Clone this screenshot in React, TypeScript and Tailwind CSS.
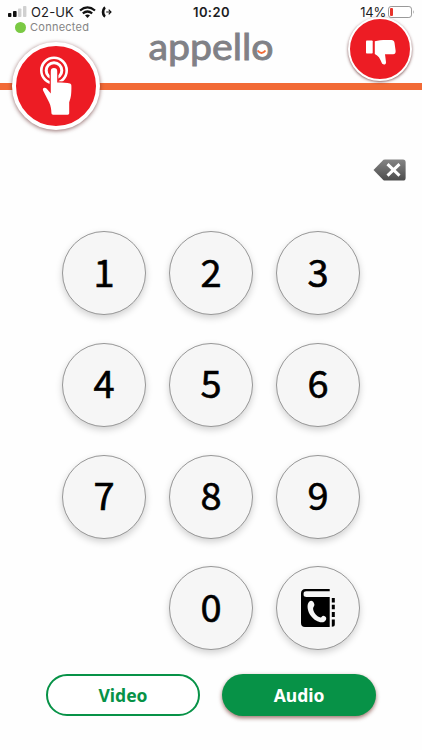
import { clsx } from 'clsx';

const digits = ['1', '2', '3', '4', '5', '6', '7', '8', '9'];

const StatusBar = () => (
    <div className="relative flex h-5 items-end justify-between pl-2 pr-[7px] font-['Inter','Noto_Sans',sans-serif] text-[#1c1c1e]">
        <div className="flex items-center">
            <svg className="h-3 w-[19px]" viewBox="0 0 19 12">
                <rect x="0" y="7" width="3.4" height="4" rx="0.8" fill="#111" />
                <rect x="5" y="5" width="3.6" height="6" rx="0.8" fill="#111" />
                <rect x="10" y="2.5" width="3.4" height="8.5" rx="0.8" fill="#d0d0d0" />
                <rect x="15" y="0" width="3.4" height="11" rx="0.8" fill="#d0d0d0" />
            </svg>
            <span className="ml-1 w-[43px] text-[13px] leading-4 tracking-[0.15px] whitespace-nowrap">O2-UK</span>
            <svg className="ml-[5px] h-3 w-[17px]" viewBox="0 0 17 12" fill="none" stroke="#111" strokeWidth="2.2">
                <path d="M1 4.5Q8.5-1.8 16 4.5" />
                <path d="M3.8 7.4Q8.5 3.6 13.2 7.4" />
                <path d="M6 9.3Q8.5 7.6 11 9.3L8.5 12Z" fill="#111" stroke="none" />
            </svg>
            <svg className="ml-[5px] h-3 w-[11px]" viewBox="0 0 11 12">
                <path d="M2.6.9 3.8.6l.9 2.2-1 1.1q-.6 2.1 0 4.2l1 1.1-.9 2.2-1.2-.3Q.7 9 .7 6T2.6.9Z" fill="#111" />
                <path d="M5.2 6H10M7.7 3.7 10 6 7.7 8.3" fill="none" stroke="#111" strokeWidth="1.1" />
            </svg>
        </div>
        <span className="absolute left-[193px] top-1 w-9 text-[13px] leading-4 font-semibold tracking-[0.4px] whitespace-nowrap">10:20</span>
        <div className="flex items-center">
            <span className="text-[13px] leading-4 tracking-[-0.2px]">14%</span>
            <svg className="ml-[2px] h-3 w-[27px]" viewBox="0 0 27 12">
                <rect x="0.5" y="0.5" width="23" height="11" rx="2.6" fill="#fff" stroke="#999" />
                <rect x="2" y="2" width="3" height="8" rx="1" fill="#e8342b" />
                <path d="M25 4q1.6 2 0 4Z" fill="#999" />
            </svg>
        </div>
    </div>
);

const Logo = () => (
    <svg className="absolute left-[140px] top-[16px] h-[62px] w-[144px]" viewBox="0 0 144 62">
        <text
            x="8.5"
            y="44"
            textLength="125"
            lengthAdjust="spacingAndGlyphs"
            fontSize="37.5"
            fill="#808186"
            stroke="#808186"
            strokeWidth="0.9"
            fontFamily="Lato, sans-serif"
        >
            appello
        </text>
        <path d="M117.5 34.5q4 5 8 0" fill="none" stroke="#f26a36" strokeWidth="2" />
    </svg>
);

const TouchIcon = () => (
    <svg className="size-[88px] shrink-0" viewBox="0 0 88 88">
        <circle cx="42" cy="28.5" r="12.7" fill="none" stroke="#fff" strokeWidth="2.6" />
        <circle cx="42" cy="28.5" r="7.8" fill="none" stroke="#fff" strokeWidth="3" />
        <path
            d="M38.8 29.2a3.2 3.2 0 0 1 6.4 0v11.3c5 .1 9.8.1 12.8 1 1.1.4 1.5 1.5 1.4 3 0 6.7-.2 10.7-2.2 15.7v10.9c0 1-.5 1.6-1.5 1.6H41.2c-1.2 0-1.8-.7-1.8-1.9-.1-3.5-.6-6.8-2.2-10.3L31.2 48.8c-1.3-2.4 1.3-4 3.3-2.2l4.3 5Z"
            fill="#fff"
            stroke="#ed1c24"
            strokeWidth="2.4"
            paintOrder="stroke"
        />
    </svg>
);

const ThumbsDownIcon = () => (
    <svg className="size-[64px] shrink-0" viewBox="0 0 64 64" fill="#fff">
        <rect x="18" y="23.5" width="6.7" height="13" rx="0.8" />
        <path d="M26.8 24.3c3.3-1 7-1.4 12-1.4h4.6c1.8 0 2.8 1 3.1 2.8l1.1 7.9c.3 2.3-.5 3.7-2.5 3.7h-8.1l1 7.9c.3 2.4-3 3.3-4.2.9-1.6-4.8-3.7-7.7-7-9.2Z" />
    </svg>
);

const PhoneBookIcon = () => (
    <svg className="h-[38px] w-[34px]" viewBox="0 0 34 38">
        <path d="M28.7 0H4.3C1.8 0 0 1.8 0 4.2V34q0 4 4 4h24.7V8H5.4C3.8 8 2.6 7.3 2.6 6V4.5c0-1.5 1.1-2.3 2.5-2.3h23.6Z" />
        <path d="M30.8 9h3v4.6h-3ZM30.8 15.8h3v4.5h-3ZM30.8 23h3v5h-3ZM30.8 30.5h3v5q0 2.2-3 2.2Z" />
        <path
            d="M8.4 12.4c2-1.7 4.5 0 5 3.2.2 2-1.6 2.6-1.3 4.4.6 3.9 4 7.9 7.4 8.5 1.5.1 1.4-2 3.4-1.6 3.1.7 3 3.7.7 5.6-3.2 2.4-10-.4-13.6-5.4C6.3 22.3 5.3 14.9 8.4 12.4Z"
            fill="#f6f6f6"
        />
    </svg>
);

interface KeyProps {
    children: React.ReactNode;
    label?: string;
    className?: string;
}

const Key: React.FC<KeyProps> = ({ children, label, className }) => (
    <button
        aria-label={label}
        className={clsx(
            "flex size-[84px] items-center justify-center rounded-full border border-[#979797] bg-[#f6f6f6] font-['Noto_Sans_CJK_JP',sans-serif] text-[38px] leading-none font-normal text-black shadow-[0_3px_7px_rgba(0,0,0,0.18)]",
            className
        )}
    >
        {children}
    </button>
);

export default function App() {
    return (
        <main className="flex h-[750px] w-[422px] flex-col overflow-hidden bg-[#fefefe]">
            <header className="relative h-[90px] shrink-0 border-b-7 border-[#f26a36]">
                <StatusBar />
                <div className="flex items-center gap-1 pl-[15px] font-['Inter','Noto_Sans',sans-serif] text-[11px] leading-[14px] tracking-[0.25px] text-[#858585]">
                    <span className="size-[11px] rounded-full bg-[#7ac943]" />
                    Connected
                </div>
                <Logo />
                <button
                    aria-label="Emergency"
                    className="absolute left-[12px] top-[42px] flex size-[88px] items-center justify-center rounded-full border-[4.5px] border-white bg-[#ed1c24] shadow-[0_1px_4px_rgba(90,30,30,0.65)]"
                >
                    <TouchIcon />
                </button>
                <button
                    aria-label="Decline"
                    className="absolute left-[348px] top-[17px] flex size-[64px] items-center justify-center rounded-full border-[2.5px] border-white bg-[#ed1c24] shadow-[0_1px_3px_rgba(90,30,30,0.75)]"
                >
                    <ThumbsDownIcon />
                </button>
            </header>

            <div className="flex h-[141px] shrink-0 items-start justify-end pt-[69px] pr-4">
                <button aria-label="Delete">
                    <svg className="h-[22px] w-[33px]" viewBox="0 0 33 22">
                        <defs>
                            <linearGradient id="deleteFill" x2="0" y2="1">
                                <stop stopColor="#858585" />
                                <stop offset="1" stopColor="#4c4c4c" />
                            </linearGradient>
                        </defs>
                        <path d="M.5 11 10.5.8Q11 .4 12 .4H30q2.6 0 2.6 2.6v16q0 2.6-2.6 2.6H12q-1 0-1.5-.4Z" fill="url(#deleteFill)" />
                        <path d="m14.5 5.2 12 11.4m0-11.4-12 11.4" stroke="#fff" strokeWidth="3" />
                    </svg>
                </button>
            </div>

            {/* Keypad */}
            <div className="grid shrink-0 grid-cols-3 gap-x-[23px] gap-y-[27.8px] self-start pl-[62px]">
                {digits.map((digit) => (
                    <Key key={digit}>
                        <span className="mb-[5px] [-webkit-text-stroke:0.6px_black]">{digit}</span>
                    </Key>
                ))}
                <Key className="col-start-2">
                    <span className="mb-[5px] [-webkit-text-stroke:0.6px_black]">0</span>
                </Key>
                <Key label="Contacts">
                    <PhoneBookIcon />
                </Key>
            </div>

            <div className="mt-6 flex gap-[22px] pl-[46px] font-['Noto_Sans',sans-serif] text-[17.5px] leading-none font-bold">
                <button className="h-[42px] w-[154px] rounded-full border-2 border-[#079247] bg-white text-[#079247]">Video</button>
                <button className="h-[42px] w-[154px] rounded-full bg-[#079247] text-white shadow-[0_2px_4px_rgba(90,20,10,0.6)]">Audio</button>
            </div>
        </main>
    );
}
